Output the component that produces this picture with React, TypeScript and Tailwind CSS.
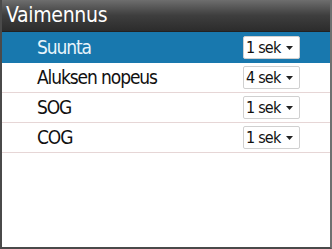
import React from "react";

const rows = [
  { label: "Suunta", value: "1 sek", selected: true },
  { label: "Aluksen nopeus", value: "4 sek" },
  { label: "SOG", value: "1 sek" },
  { label: "COG", value: "1 sek" },
];

export default function App() {
  return (
    <div
      className="w-[332px] h-[249px] bg-white border-l-2 border-r-2 border-b-2 border-l-[#4a4a4a] border-r-[#707070] border-b-[#4a4a4a] flex flex-col overflow-hidden"
      style={{ fontFamily: '"DejaVu Sans Condensed", "DejaVu Sans", sans-serif' }}
    >
      <div className="h-[32px] shrink-0 bg-gradient-to-b from-[#6e6e6e] via-[#3e3e3e] to-[#2c2c2c] border-b border-[#222] flex items-center pl-[4px] text-white text-[21px] tracking-[-0.3px] leading-none">
        Vaimennus
      </div>
      {rows.map((r) => (
        <div
          key={r.label}
          className={
            r.selected
              ? "h-[31px] shrink-0 bg-[#1878ae] flex items-center pl-[35px] pr-[30px] text-[#e8f4fb] text-[19px] tracking-[-1.1px]"
              : "h-[30px] shrink-0 border-b border-[#e6d6d6] flex items-center pl-[35px] pr-[30px] text-[#111] text-[19px] tracking-[-1.1px]"
          }
        >
          <span className="flex-1 leading-none">{r.label}</span>
          <div className="w-[57px] h-[23px] bg-white border border-[#d0d0d0] rounded-[2px] flex items-center pl-[2px] pr-[6px] text-[#111] text-[16px] tracking-[-0.8px] leading-none">
            <span className="flex-1">{r.value}</span>
            <svg width="7" height="4" viewBox="0 0 7 4">
              <path d="M0 0 L7 0 L3.5 4 Z" fill="#222" />
            </svg>
          </div>
        </div>
      ))}
    </div>
  );
}
